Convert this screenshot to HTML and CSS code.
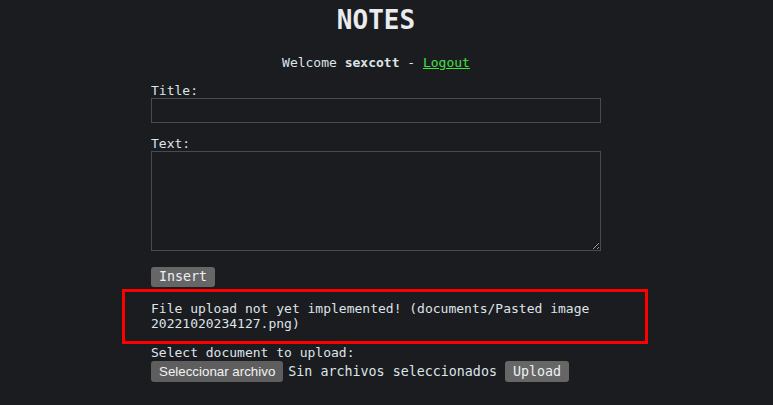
FILE: index.html
```html
<!DOCTYPE html>
<html lang="es">
<head>
<meta charset="utf-8">
<title>Notes</title>
<link rel="stylesheet" href="styles.css">
</head>
<body>
<div class="page">
  <h1 class="title">NOTES</h1>
  <p class="welcome">Welcome <b>sexcott</b> - <a href="#" class="logout">Logout</a></p>
  <form class="note-form">
    <label class="label" for="t">Title:</label>
    <input class="field" id="t" type="text">
    <label class="label label-text" for="x">Text:</label>
    <textarea class="area" id="x"></textarea>
    <div class="actions"><button type="button" class="btn">Insert</button></div>
  </form>
  <div class="alert">File upload not yet implemented! (documents/Pasted image 20221020234127.png)</div>
  <div class="upload">
    <div class="label">Select document to upload:</div>
    <div class="upload-row">
      <button type="button" class="file-btn">Seleccionar archivo</button><span class="file-name">Sin archivos seleccionados</span><button type="button" class="btn btn-upload">Upload</button>
    </div>
  </div>
</div>
</body>
</html>
```
FILE: styles.css
```css
html, body {
  margin: 0;
  padding: 0;
  background: #1b1c1f;
}
body {
  color: #dde4ea;
  font-family: "DejaVu Sans Mono", monospace;
  font-size: 13px;
  line-height: 15px;
}
.page {
  width: 450px;
  margin-left: 151px;
}
.title {
  margin: 5px 0 0;
  font-size: 26px;
  line-height: 30px;
  text-align: center;
  font-weight: bold;
  color: #e8ecef;
}
.welcome {
  margin: 20px 0 0;
  text-align: center;
}
.welcome b {
  font-weight: bold;
}
.logout {
  color: #44e044;
  text-decoration: underline;
}
.note-form {
  margin: 13px 0 0;
}
.label {
  display: block;
}
.label-text {
  margin-top: 13px;
}
.field {
  display: block;
  box-sizing: border-box;
  width: 450px;
  height: 25px;
  margin: 0;
  border: 1px solid #4a4b4e;
  background: #1b1c1f;
  color: #dde4ea;
  font: inherit;
  padding: 2px 4px;
}
.area {
  display: block;
  box-sizing: border-box;
  width: 450px;
  height: 100px;
  margin: 0;
  border: 1px solid #4a4b4e;
  background: #1b1c1f;
  color: #dde4ea;
  font: inherit;
  padding: 2px 4px;
  color-scheme: dark;
}
.actions {
  margin-top: 16px;
  display: flex;
}
.btn {
  height: 20px;
  box-sizing: border-box;
  padding: 0 8px;
  border: none;
  border-radius: 3px;
  background: #666667;
  color: #edf0f3;
  font-family: "DejaVu Sans Mono", monospace;
  font-size: 13.33px;
  line-height: 20px;
  white-space: nowrap;
}
.alert {
  margin: 2px 0 0 -29px;
  width: 450px;
  border: 3px solid #ff0000;
  padding: 9px 44px 10px 26px;
}
.upload {
  margin-top: 1px;
}
.upload-row {
  display: flex;
  align-items: center;
  margin-top: 1px;
}
.file-btn {
  height: 21px;
  box-sizing: border-box;
  padding: 0 8px;
  border: none;
  border-radius: 3px;
  background: #5e5e5f;
  color: #f2f2f2;
  font-family: "Liberation Sans", Arial, sans-serif;
  font-size: 13.33px;
  line-height: 21px;
  white-space: nowrap;
}
.file-name {
  margin-left: 5px;
  font-size: 13.33px;
  white-space: nowrap;
}
.btn-upload {
  height: 21px;
  line-height: 21px;
  margin-left: 8px;
}
```
